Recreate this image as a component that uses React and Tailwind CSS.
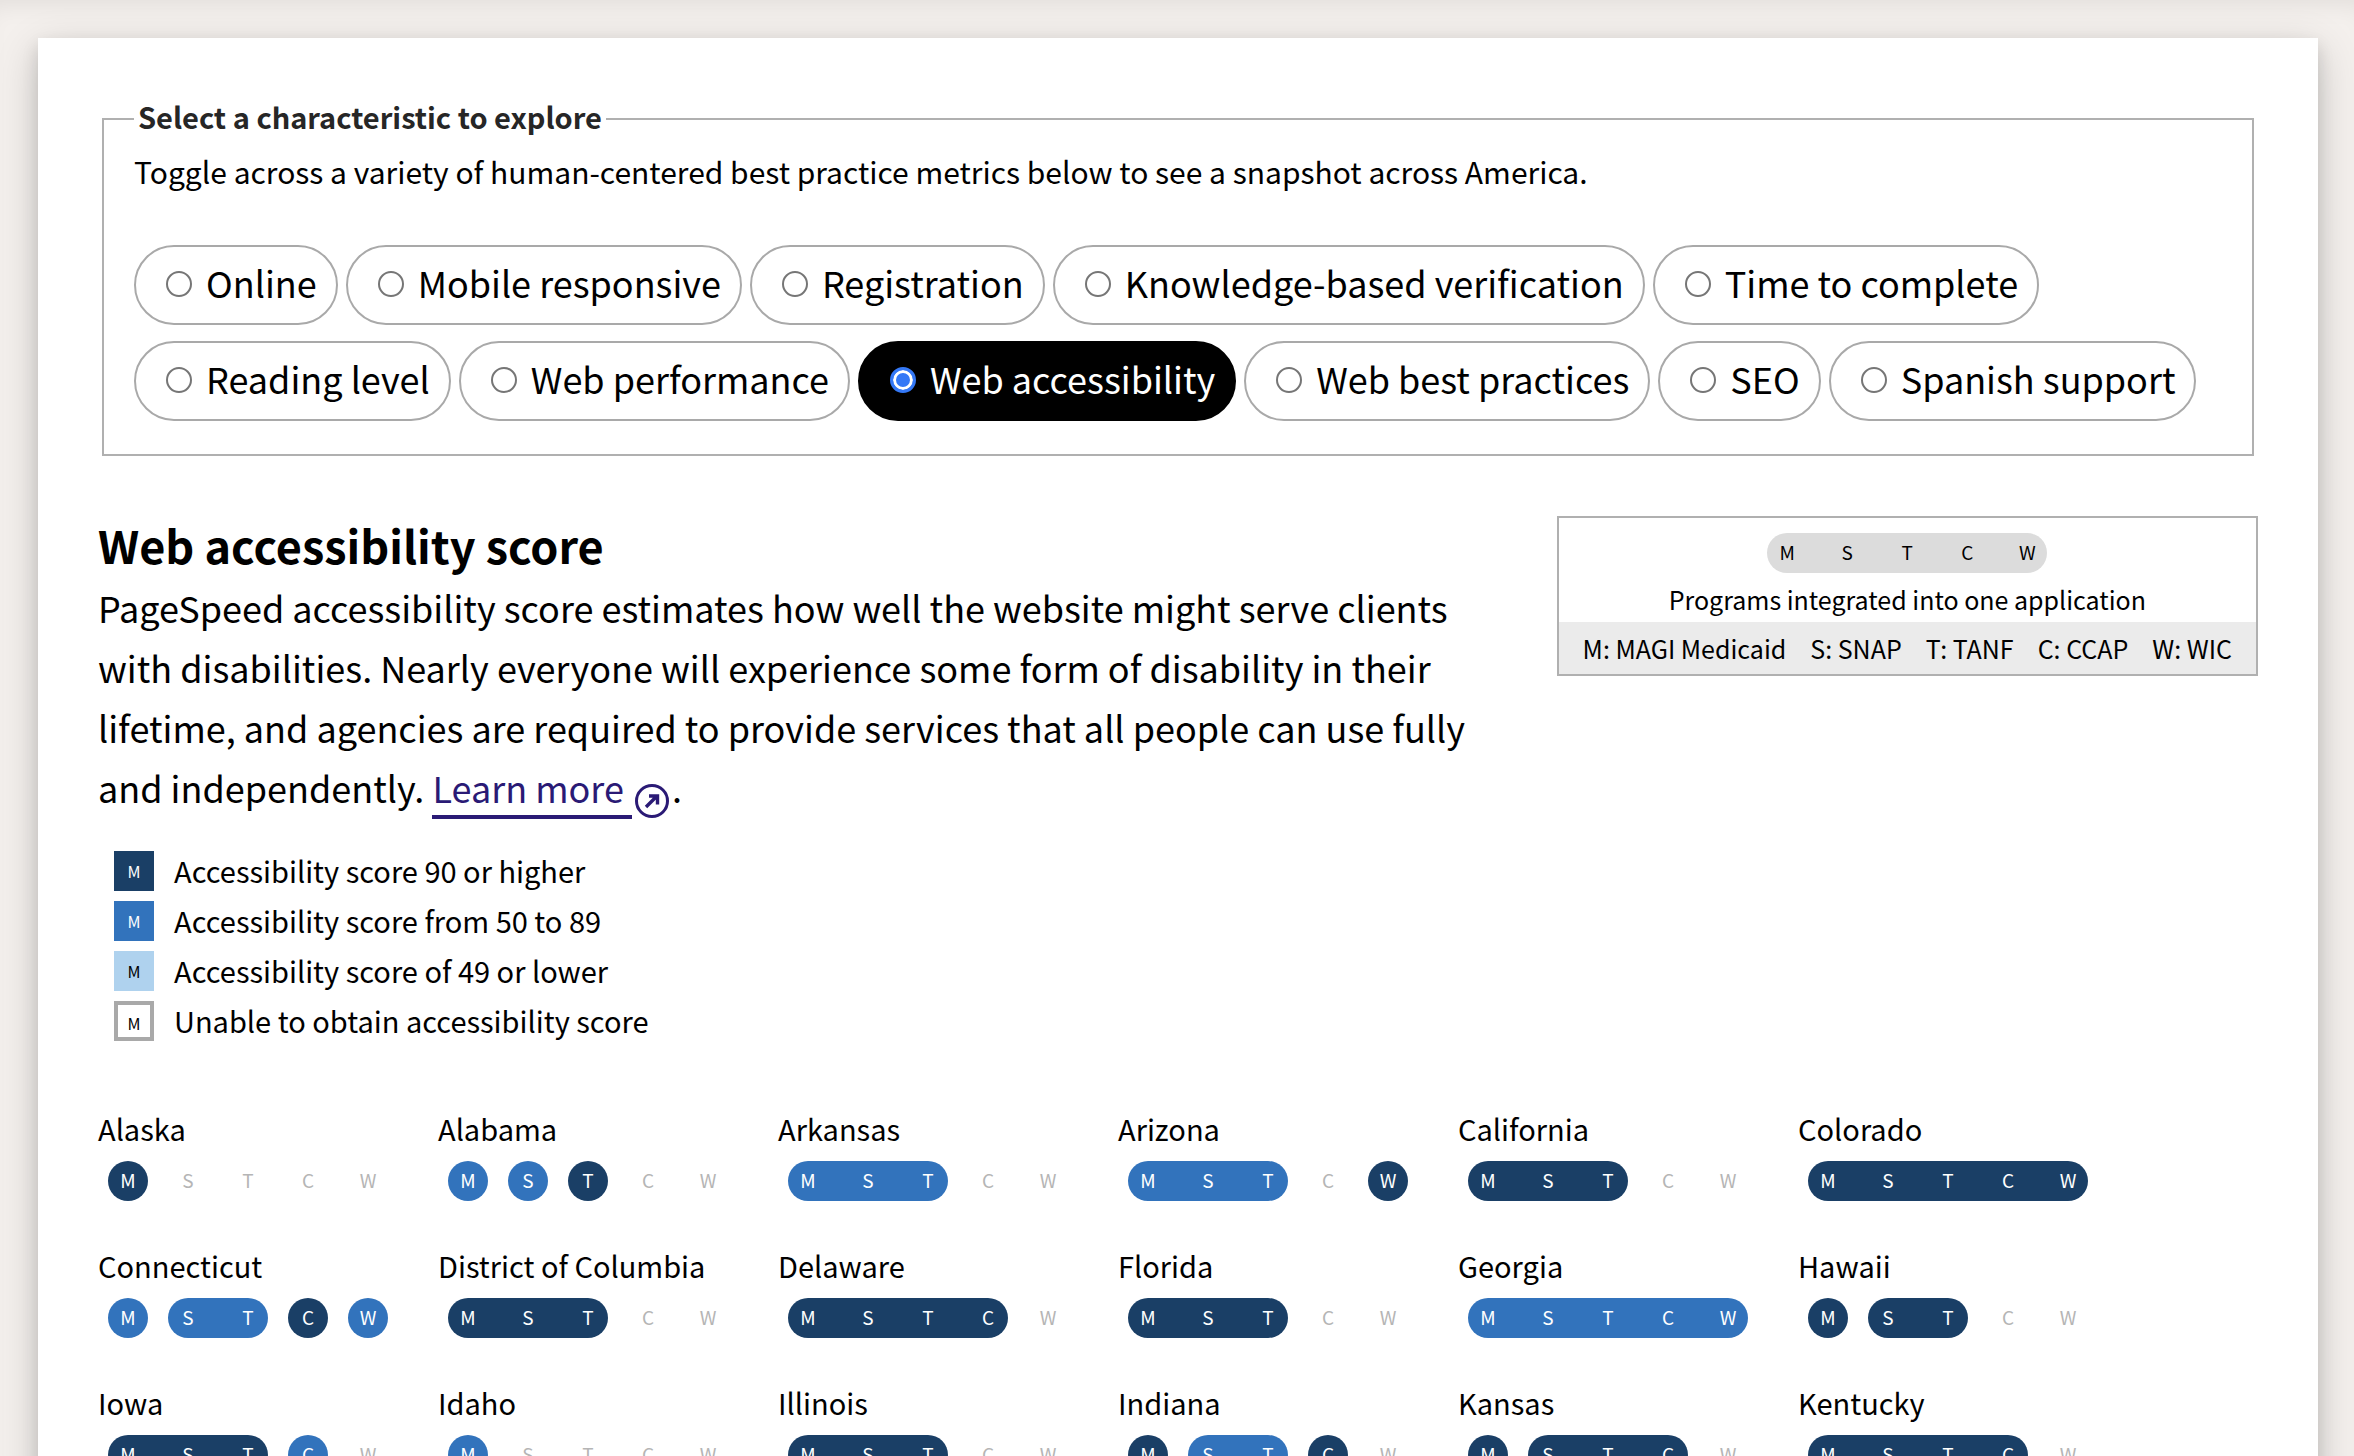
import React, { useState } from "react";

const PROGRAMS = ["M", "S", "T", "C", "W"];

const CHARACTERISTICS = [
  "Online",
  "Mobile responsive",
  "Registration",
  "Knowledge-based verification",
  "Time to complete",
  "Reading level",
  "Web performance",
  "Web accessibility",
  "Web best practices",
  "SEO",
  "Spanish support",
];

const TONES = {
  high: "bg-[#1a3f66] text-white",
  mid: "bg-[#3273bc] text-white",
  none: "text-[#b5b5b5]",
  key: "bg-[#dcdcdc] text-black",
};

const SCORE_KEY = [
  { label: "Accessibility score 90 or higher", swatch: "bg-[#1a3f66] text-white" },
  { label: "Accessibility score from 50 to 89", swatch: "bg-[#3273bc] text-white" },
  { label: "Accessibility score of 49 or lower", swatch: "bg-[#afd2ee] text-black" },
  { label: "Unable to obtain accessibility score", swatch: "border-4 border-[#a9a9a9] bg-white pt-1 text-black" },
];

const STATES = [
  { name: "Alaska", groups: [["M", "high"]] },
  { name: "Alabama", groups: [["M", "mid"], ["S", "mid"], ["T", "high"]] },
  { name: "Arkansas", groups: [["MST", "mid"]] },
  { name: "Arizona", groups: [["MST", "mid"], ["C", "none"], ["W", "high"]] },
  { name: "California", groups: [["MST", "high"]] },
  { name: "Colorado", groups: [["MSTCW", "high"]] },
  { name: "Connecticut", groups: [["M", "mid"], ["ST", "mid"], ["C", "high"], ["W", "mid"]] },
  { name: "District of Columbia", groups: [["MST", "high"]] },
  { name: "Delaware", groups: [["MSTC", "high"]] },
  { name: "Florida", groups: [["MST", "high"]] },
  { name: "Georgia", groups: [["MSTCW", "mid"]] },
  { name: "Hawaii", groups: [["M", "high"], ["ST", "high"]] },
  { name: "Iowa", groups: [["MST", "high"], ["C", "mid"]] },
  { name: "Idaho", groups: [["M", "mid"]] },
  { name: "Illinois", groups: [["MST", "high"]] },
  { name: "Indiana", groups: [["M", "high"], ["ST", "mid"], ["C", "high"]] },
  { name: "Kansas", groups: [["M", "high"], ["STC", "high"]] },
  { name: "Kentucky", groups: [["MSTC", "high"]] },
];

function ProgramGroup({ letters, tone }) {
  return (
    <div className={`flex h-10 gap-5 rounded-full ${TONES[tone]}`}>
      {letters.split("").map((letter) => (
        <span key={letter} className="w-10 text-center text-[19px] leading-[38px]">
          {letter}
        </span>
      ))}
    </div>
  );
}

function StateCard({ name, groups }) {
  const shown = groups.map(([letters]) => letters).join("");
  const rest = PROGRAMS.filter((p) => !shown.includes(p)).map((p) => [p, "none"]);
  return (
    <li>
      <h3 className="text-[29px] leading-[46px]">{name}</h3>
      <div className="mt-[10px] flex gap-5 pl-[10px]">
        {[...groups, ...rest].map(([letters, tone]) => (
          <ProgramGroup key={letters} letters={letters} tone={tone} />
        ))}
      </div>
    </li>
  );
}

function CharacteristicPicker() {
  const [selected, setSelected] = useState("Web accessibility");
  return (
    <fieldset className="mx-1 border-2 border-[#b0b0b0] px-[30px] pb-[33px]">
      <legend className="px-1 pb-[6px] text-[29px] leading-[38px] font-bold text-[#262626]">
        Select a characteristic to explore
      </legend>
      <p className="mt-[10px] text-[30px] leading-10">
        Toggle across a variety of human-centered best practice metrics below to see a snapshot
        across America.
      </p>
      <div className="mt-[54px] flex flex-wrap gap-x-2 gap-y-4">
        {CHARACTERISTICS.map((label) => {
          const on = label === selected;
          return (
            <label
              key={label}
              className={`flex h-20 items-center gap-[14px] rounded-full border-2 pr-[19px] pb-[3px] pl-[30px] text-[36px] leading-[64px] ${
                on ? "border-black bg-black text-white" : "border-[#a9a9a9]"
              }`}
            >
              <input
                type="radio"
                name="characteristic"
                checked={on}
                onChange={() => setSelected(label)}
                className="size-[26px] appearance-none rounded-full border-2 border-[#767676] bg-white checked:border-[3px] checked:border-[#3478f6] checked:bg-[#3478f6] checked:shadow-[inset_0_0_0_3px_white]"
              />
              <span className="pb-1">{label}</span>
            </label>
          );
        })}
      </div>
    </fieldset>
  );
}

function ProgramKey() {
  return (
    <aside className="shrink-0 border-2 border-[#b0b0b0] text-[25px]">
      <div className="flex flex-col items-center pt-[15px]">
        <ProgramGroup letters="MSTCW" tone="key" />
        <p className="mt-[6px] mb-[3px] leading-10">Programs integrated into one application</p>
      </div>
      <ul className="flex justify-center gap-6 bg-[#ebebeb] px-6 leading-[52px]">
        <li>M: MAGI Medicaid</li>
        <li>S: SNAP</li>
        <li>T: TANF</li>
        <li>C: CCAP</li>
        <li>W: WIC</li>
      </ul>
    </aside>
  );
}

function ExternalIcon() {
  return (
    <svg viewBox="0 0 34 34" className="mx-[3px] inline-block size-[34px] align-[-15px]" fill="none" stroke="#2a1a75" aria-hidden="true">
      <circle cx="17" cy="17" r="15.5" strokeWidth="3" />
      <path d="M11 23L22 12M14 12H22.5V20.5" strokeWidth="3.4" />
    </svg>
  );
}

export default function App() {
  return (
    <div className="overflow-hidden bg-[#f4f0ed] pt-[38px] pr-9 pl-[38px] font-['Noto_Sans_CJK_SC',sans-serif] text-black shadow-[inset_0_20px_24px_-16px_rgba(0,0,0,0.08)]">
      <main className="bg-white px-[60px] pt-[59px] pb-10 shadow-[0_8px_16px_rgba(0,0,0,0.12),0_12px_40px_rgba(0,0,0,0.19)]">
        <CharacteristicPicker />

        <section className="mt-[60px] flex items-start justify-between">
          <div className="max-w-[1380px]">
            <h2 className="mb-[3px] text-[45px] leading-[58px] font-bold">Web accessibility score</h2>
            <p className="text-[36px] leading-[60px]">
              PageSpeed accessibility score estimates how well the website might serve clients with
              disabilities. Nearly everyone will experience some form of disability in their
              lifetime, and agencies are required to provide services that all people can use fully
              and independently.{" "}
              <a href="#learn-more" className="text-[#2a1a75]">
                <span className="border-b-4 border-[#2a1a75] pb-[2px] whitespace-pre">Learn more </span>
                <ExternalIcon />
              </a>
              .
            </p>
          </div>
          <ProgramKey />
        </section>

        <ul className="mt-[33px] flex flex-col gap-[10px] pl-4">
          {SCORE_KEY.map(({ label, swatch }) => (
            <li key={label} className="flex items-start gap-5 text-[29px] leading-[38px]">
              <span className={`flex size-10 items-center justify-center text-[16px] ${swatch}`}>M</span>
              {label}
            </li>
          ))}
        </ul>

        <ul className="mt-16 grid grid-cols-[repeat(auto-fill,340px)] gap-y-[41px]">
          {STATES.map((state) => (
            <StateCard key={state.name} {...state} />
          ))}
        </ul>
      </main>
    </div>
  );
}
